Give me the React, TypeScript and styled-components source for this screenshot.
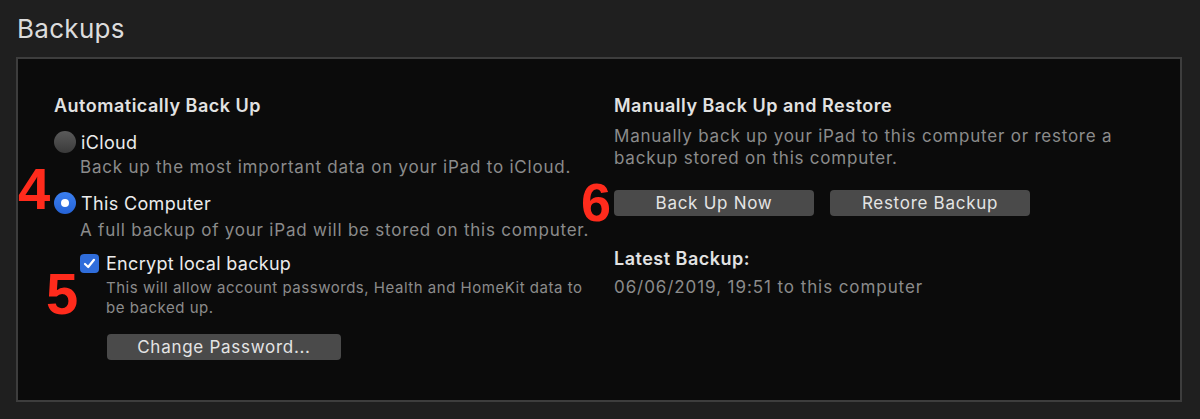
import React, { FC } from "react";
import styled, { createGlobalStyle } from "styled-components";

const GlobalStyle = createGlobalStyle`
  html, body {
    margin: 0;
    padding: 0;
    background: #1f1f1f;
  }
  body {
    font-family: Inter, "Liberation Sans", Arial, sans-serif;
    -webkit-font-smoothing: antialiased;
  }
`;

const Page = styled.div`
  width: 1200px;
  height: 419px;
  box-sizing: border-box;
  padding: 13px 0 0 16px;
  background: #1f1f1f;
`;

const Title = styled.h1`
  margin: 0 0 0 1px;
  font-size: 26px;
  line-height: 32px;
  font-weight: 400;
  letter-spacing: 0.3px;
  color: #dcdcdc;
`;

const Panel = styled.section`
  position: relative;
  margin-top: 12px;
  width: 1166px;
  height: 345px;
  box-sizing: border-box;
  border: 2px solid #3d3d3d;
  background: #0b0b0b;
  display: grid;
  grid-template-columns: 560px 1fr;
  padding: 36px 0 0 36px;
`;

const Column = styled.div`
  display: flex;
  flex-direction: column;
  align-items: flex-start;
`;

const Heading = styled.h2<{ $mb: number }>`
  margin: 0 0 ${(p) => p.$mb}px 0;
  font-size: 18px;
  line-height: 22px;
  font-weight: 600;
  letter-spacing: 0.5px;
  color: #e2e2e2;
`;

const OptionRow = styled.label<{ $mb: number }>`
  display: flex;
  align-items: center;
  height: 24px;
  margin-bottom: ${(p) => p.$mb}px;
  font-size: 18px;
  letter-spacing: 0.35px;
  color: #ececec;
`;

const Radio = styled.span<{ $on?: boolean }>`
  width: 22px;
  height: 22px;
  border-radius: 50%;
  margin-right: 5px;
  box-sizing: border-box;
  display: flex;
  align-items: center;
  justify-content: center;
  background: ${(p) =>
    p.$on
      ? "linear-gradient(#3b7ff0, #2563d6)"
      : "linear-gradient(#5a5a5a, #3a3a3a)"};
  &::after {
    content: "";
    width: 8px;
    height: 8px;
    border-radius: 50%;
    background: #fff;
    display: ${(p) => (p.$on ? "block" : "none")};
  }
`;

const Desc = styled.p<{ $indent: number; $mb: number }>`
  margin: 0 0 ${(p) => p.$mb}px ${(p) => p.$indent}px;
  font-size: 17px;
  line-height: 22px;
  letter-spacing: 0.78px;
  color: #8b8b8b;
  white-space: nowrap;
`;

const WrapDesc = styled(Desc)`
  white-space: normal;
  width: 520px;
`;

const CheckRow = styled.label`
  display: flex;
  align-items: center;
  height: 24px;
  margin: 0 0 3px 26px;
  font-size: 18px;
  letter-spacing: 0.3px;
  color: #ececec;
`;

const Check = styled.span`
  width: 19px;
  height: 19px;
  border-radius: 4px;
  margin-right: 7px;
  background: #2f6ddb;
  display: flex;
  align-items: center;
  justify-content: center;
`;

const Small = styled.p`
  margin: 0 0 17px 52px;
  width: 490px;
  font-size: 15px;
  line-height: 19.5px;
  letter-spacing: 0.52px;
  color: #8b8b8b;
`;

const Button = styled.button<{ $w: number; $ml?: number }>`
  width: ${(p) => p.$w}px;
  height: 26px;
  margin-left: ${(p) => p.$ml ?? 0}px;
  padding: 0;
  border: none;
  border-radius: 4px;
  background: #4a4a4a;
  color: #e4e4e4;
  font-family: inherit;
  font-size: 17px;
  line-height: 26px;
  letter-spacing: 0.72px;
`;

const ButtonRow = styled.div`
  display: flex;
  gap: 16px;
  margin-bottom: 32px;
`;

const Value = styled.p`
  margin: 0;
  font-size: 17px;
  line-height: 22px;
  letter-spacing: 0.92px;
  color: #8b8b8b;
`;

const Marker = styled.span<{ $x: number; $y: number; $size: number }>`
  position: absolute;
  left: ${(p) => p.$x}px;
  top: ${(p) => p.$y}px;
  font-family: "Liberation Sans", Arial, sans-serif;
  font-weight: 700;
  font-size: ${(p) => p.$size}px;
  line-height: ${(p) => p.$size}px;
  color: #ff2b1c;
`;

const CheckMark: FC = () => (
  <svg width="13" height="13" viewBox="0 0 13 13">
    <path
      d="M2 7 L5.2 10 L11 2.8"
      fill="none"
      stroke="#fff"
      strokeWidth="2.2"
      strokeLinecap="round"
      strokeLinejoin="round"
    />
  </svg>
);

export default function App() {
  return (
    <>
      <GlobalStyle />
      <Page>
        <Title>Backups</Title>
        <Panel>
          <Column>
            <Heading $mb={13}>Automatically Back Up</Heading>
            <OptionRow $mb={2}>
              <Radio />
              iCloud
            </OptionRow>
            <Desc $indent={26} $mb={13}>
              Back up the most important data on your iPad to iCloud.
            </Desc>
            <OptionRow $mb={4}>
              <Radio $on />
              This Computer
            </OptionRow>
            <Desc $indent={26} $mb={10}>
              A full backup of your iPad will be stored on this computer.
            </Desc>
            <CheckRow>
              <Check>
                <CheckMark />
              </Check>
              Encrypt local backup
            </CheckRow>
            <Small>
              This will allow account passwords, Health and HomeKit data to be
              backed up.
            </Small>
            <Button $w={234} $ml={53}>
              Change Password...
            </Button>
          </Column>
          <Column>
            <Heading $mb={8}>Manually Back Up and Restore</Heading>
            <WrapDesc $indent={0} $mb={21}>
              Manually back up your iPad to this computer or restore a backup
              stored on this computer.
            </WrapDesc>
            <ButtonRow>
              <Button $w={200}>Back Up Now</Button>
              <Button $w={200}>Restore Backup</Button>
            </ButtonRow>
            <Heading $mb={6}>Latest Backup:</Heading>
            <Value>06/06/2019, 19:51 to this computer</Value>
          </Column>
          <Marker $x={0} $y={101} $size={58}>4</Marker>
          <Marker $x={28} $y={206} $size={58}>5</Marker>
          <Marker $x={563} $y={116} $size={54}>6</Marker>
        </Panel>
      </Page>
    </>
  );
}
